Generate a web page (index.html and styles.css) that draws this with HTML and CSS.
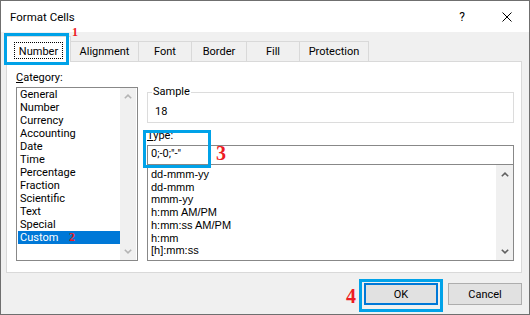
FILE: index.html
```html
<!DOCTYPE html>
<html lang="en">
<head>
  <meta charset="UTF-8" />
  <title>Format Cells</title>
  <link rel="stylesheet" href="styles.css">
</head>
<body>

  <div class="dialog">
    <!-- TITLE BAR -->
    <div class="titlebar">
      <span class="title">Format Cells</span>
      <span class="help">?</span>
      <svg class="close" width="10" height="10" viewBox="0 0 10 10">
        <path d="M0.5 0.5 L9.5 9.5 M9.5 0.5 L0.5 9.5" stroke="#000" stroke-width="1" fill="none"/>
      </svg>
    </div>

    <!-- TABS -->
    <div class="tabs">
      <div class="tab active"><span class="focus">Number</span></div>
      <div class="tab tab-align">Alignment</div>
      <div class="tab tab-font">Font</div>
      <div class="tab tab-border">Border</div>
      <div class="tab tab-fill">Fill</div>
      <div class="tab tab-protect">Protection</div>
    </div>

    <!-- PANEL -->
    <div class="panel">
      <div class="category">
        <div class="label"><u>C</u>ategory:</div>
        <div class="listbox cat-list">
          <ul class="items">
            <li>General</li>
            <li>Number</li>
            <li>Currency</li>
            <li>Accounting</li>
            <li>Date</li>
            <li>Time</li>
            <li>Percentage</li>
            <li>Fraction</li>
            <li>Scientific</li>
            <li>Text</li>
            <li>Special</li>
            <li class="selected">Custom</li>
          </ul>
          <div class="scroll disabled">
            <div class="arrow">
              <svg width="8" height="5" viewBox="0 0 8 5"><polyline points="0.8,4.3 4,1.2 7.2,4.3" /></svg>
            </div>
            <div class="arrow">
              <svg width="8" height="5" viewBox="0 0 8 5"><polyline points="0.8,0.7 4,3.8 7.2,0.7" /></svg>
            </div>
          </div>
        </div>
      </div>

      <div class="details">
        <fieldset class="sample">
          <legend>Sample</legend>
          <div class="sample-value">18</div>
        </fieldset>

        <div class="label type-label"><u>T</u>ype:</div>
        <div class="type-input">0;-0;"-"</div>

        <div class="listbox type-list">
          <ul class="items formats">
            <li>dd-mmm-yy</li>
            <li>dd-mmm</li>
            <li>mmm-yy</li>
            <li>h:mm AM/PM</li>
            <li>h:mm:ss AM/PM</li>
            <li>h:mm</li>
            <li>[h]:mm:ss</li>
          </ul>
          <div class="scroll">
            <div class="arrow">
              <svg width="8" height="5" viewBox="0 0 8 5"><polyline points="0.8,4.3 4,1.2 7.2,4.3" /></svg>
            </div>
            <div class="arrow">
              <svg width="8" height="5" viewBox="0 0 8 5"><polyline points="0.8,0.7 4,3.8 7.2,0.7" /></svg>
            </div>
          </div>
        </div>
      </div>
    </div>

    <!-- BUTTONS -->
    <div class="footer">
      <button class="btn default">OK</button>
      <button class="btn">Cancel</button>
    </div>

    <!-- ANNOTATIONS -->
    <div class="mark mark-tab"></div>
    <div class="mark mark-type"></div>
    <div class="mark mark-ok"></div>
    <span class="step step-1">1</span>
    <span class="step step-2">2</span>
    <span class="step step-3">3</span>
    <span class="step step-4">4</span>
  </div>

</body>
</html>
```

FILE: styles.css
```css
* {
  box-sizing: border-box;
}

body {
  margin: 0;
  font-family: Roboto, 'Noto Sans', sans-serif;
  font-size: 11px;
  color: #000;
  background-color: #f0f0f0;
}

.dialog {
  position: relative;
  width: 530px;
  height: 315px;
  border: 1px solid #6f6f6f;
  background-color: #f0f0f0;
  display: flex;
  flex-direction: column;
}

/* title bar */
.titlebar {
  height: 31px;
  flex-shrink: 0;
  background-color: #fff;
  display: flex;
  align-items: center;
  padding-left: 9px;
}

.title {
  flex: 1;
  font-size: 11.5px;
  line-height: 14px;
}

.help {
  font-size: 12px;
  line-height: 14px;
  margin-right: 37px;
}

.close {
  display: block;
  margin-right: 17px;
}

/* tabs */
.tabs {
  position: relative;
  z-index: 1;
  height: 29px;
  flex-shrink: 0;
  display: flex;
  align-items: flex-end;
  padding-left: 5px;
}

.tab {
  height: 20px;
  border-top: 1px solid #d9d9d9;
  border-right: 1px solid #d9d9d9;
  text-align: center;
  line-height: 19px;
  white-space: nowrap;
}

.tab.active {
  width: 65px;
  height: 26px;
  margin-bottom: -1px;
  border-left: 1px solid #d9d9d9;
  background-color: #fff;
  padding-top: 5px;
}

.focus {
  display: inline-block;
  height: 17px;
  line-height: 13px;
  padding: 2px 4px 0;
  border: 1px dotted #000;
}

.tab-align { width: 68px; }
.tab-font { width: 53px; }
.tab-border { width: 55px; }
.tab-fill { width: 53px; }
.tab-protect { width: 69px; }

/* panel */
.panel {
  height: 212px;
  flex-shrink: 0;
  margin: 0 7px 0 5px;
  background-color: #fff;
  border: 1px solid #d9d9d9;
  display: flex;
  padding: 9px 0 0 9px;
}

.label {
  line-height: 14px;
}

.category {
  width: 122px;
}

.listbox {
  border: 1px solid #888;
  display: flex;
  background-color: #fff;
}

.cat-list {
  margin-top: 2px;
  height: 174px;
  padding: 0 1px;
}

.items {
  list-style: none;
  margin: 0;
  padding: 0;
  flex: 1;
}

.items li {
  line-height: 13px;
  padding-left: 2px;
  white-space: nowrap;
}

.items li.selected {
  background-color: #0078d7;
  color: #fff;
}

.scroll {
  width: 16px;
  background-color: #f0f0f0;
  display: flex;
  flex-direction: column;
  justify-content: space-between;
}

.arrow {
  height: 17px;
  display: flex;
  align-items: center;
  justify-content: center;
}

.arrow svg {
  display: block;
}

.arrow polyline {
  fill: none;
  stroke: #606060;
  stroke-width: 1.6;
}

.scroll.disabled polyline {
  stroke: #b4b4b4;
}

.details {
  width: 367px;
  margin-left: 9px;
  padding-top: 14px;
}

.sample {
  margin: 0;
  padding: 0 0 3px 7px;
  border: 1px solid #dcdcdc;
  min-width: 0;
}

.sample legend {
  padding: 0 1px;
  margin-left: -3px;
  line-height: 14px;
}

.sample-value {
  margin-top: 6px;
  line-height: 14px;
}

.type-label {
  margin-top: 6px;
}

.type-input {
  margin-top: 2px;
  height: 20px;
  border: 1px solid #888;
  padding: 0 3px 2px;
  line-height: 16px;
  background-color: #fff;
}

.type-list {
  margin-top: -1px;
  height: 97px;
}

.type-list .scroll {
  width: 17px;
  padding-top: 1px;
}

.formats {
  padding-top: 3px;
  padding-left: 1px;
  font-family: 'Liberation Sans', Arial, sans-serif;
}

.formats li {
  line-height: 12.7px;
}

/* buttons */
.footer {
  display: flex;
  justify-content: flex-end;
  gap: 10px;
  padding: 10px 7px 0 0;
}

.btn {
  width: 74px;
  height: 22px;
  font-family: Roboto, 'Noto Sans', sans-serif;
  font-size: 11px;
  color: #000;
  background-color: #e1e1e1;
  border: 1px solid #adadad;
  padding: 0;
}

.btn.default {
  border: 2px solid #0078d7;
}

/* annotations drawn over the dialog */
.mark {
  position: absolute;
  border: 3px solid #00a2e8;
  z-index: 2;
}

.mark-tab {
  left: 3px;
  top: 32px;
  width: 65px;
  height: 32px;
}

.mark-type {
  left: 142px;
  top: 129px;
  width: 68px;
  height: 38px;
}

.mark-ok {
  left: 358px;
  top: 278px;
  width: 84px;
  height: 33px;
}

.step {
  position: absolute;
  z-index: 2;
  font-family: 'Liberation Serif', serif;
  font-weight: bold;
  color: #ed1c24;
}

.step-1,
.step-2 {
  font-size: 12px;
  line-height: 12px;
}

.step-3,
.step-4 {
  font-size: 20px;
  line-height: 20px;
}

.step-1 { left: 71px; top: 25px; }
.step-2 { left: 68px; top: 230px; }
.step-3 { left: 215px; top: 142px; }
.step-4 { left: 345px; top: 285px; }
```
